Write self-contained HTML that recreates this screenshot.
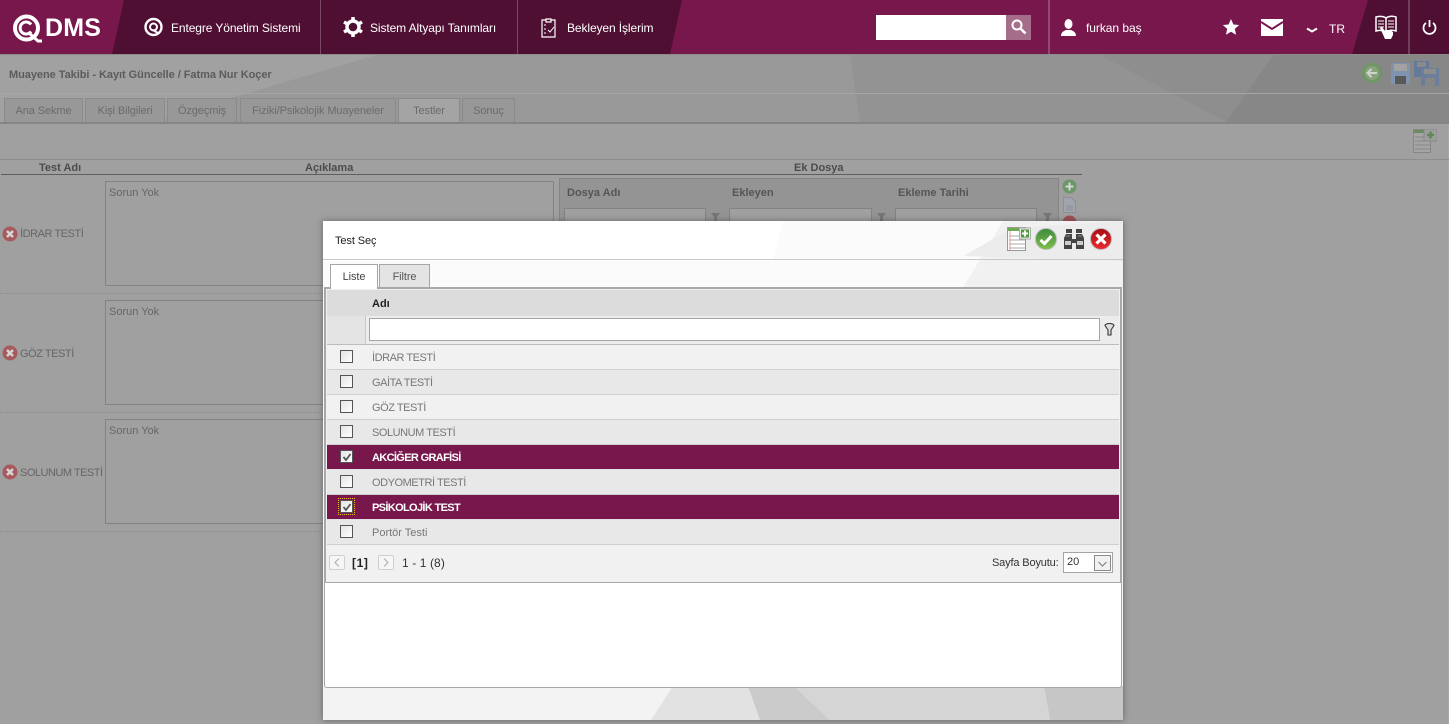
<!DOCTYPE html>
<html lang="tr"><head><meta charset="utf-8"><title>QDMS</title>
<style>
html,body{margin:0;padding:0}
body{width:1449px;height:724px;overflow:hidden;position:relative;background:#a0a0a0;font-family:"Liberation Sans",sans-serif;font-size:11px;color:#555}
div,span,svg{position:absolute}
.t{white-space:nowrap;line-height:14px}
.nav{color:#fff;font-size:12px;letter-spacing:-.1px}
.tab{top:98px;height:24px;background:#989898;border:1px solid #8a8a8a;border-bottom:0;box-sizing:border-box;text-align:center;line-height:24px;color:#6b6b6b;font-size:11px;letter-spacing:-.1px}
.h{font-weight:bold;font-size:11px;color:#4c4c4c}
.ta{left:105px;width:449px;border:1px solid #838383;box-sizing:border-box;color:#666;padding:5px 3px;line-height:12px}
.row{left:327px;width:792px;height:25px;box-sizing:border-box;border-bottom:1px solid #cfcfcf}
.row .cb{left:13px;top:5px;width:13px;height:13px;border:1px solid #555;box-sizing:border-box;background:linear-gradient(135deg,#e4e4e4,#fff)}
.row .l{left:45px;top:6px;color:#777;white-space:nowrap;line-height:14px;font-size:11px;letter-spacing:-.45px}
.sel{background:#77174b;border-bottom:1px solid #e2e2e2}
.sel .l{color:#fff;font-weight:bold;letter-spacing:-.65px}
</style></head><body>

<!-- background polygons -->
<svg style="left:0;top:54px" width="1449" height="70" viewBox="0 0 1449 70">
<rect width="1449" height="70" fill="#a1a1a1"/>
<polygon points="380,0 1449,0 1449,68 150,68" fill="#999999"/>
<polygon points="850,0 1449,0 1449,68 860,68" fill="#939393"/>
<polygon points="1098,0 1274,0 1226,68" fill="#8e8e8e"/>
<polygon points="1274,0 1449,0 1449,68 1226,68" fill="#878787"/>
</svg>
<div style="left:0;top:93px;width:1449px;height:1px;background:#a6a6a6"></div>

<!-- header -->
<div style="left:0;top:0;width:1449px;height:54px;background:#77174b"></div>
<svg style="left:0;top:0" width="1449" height="54"><polygon points="124,0 682,0 670,54 112,54" fill="#4f0f32"/><polygon points="1368,0 1449,0 1449,54 1352,54" fill="#4f0f32"/></svg>
<div style="left:320px;top:0;width:1px;height:54px;background:#7a4a63"></div>
<div style="left:517px;top:0;width:1px;height:54px;background:#7a4a63"></div>
<div style="left:1048px;top:0;width:2px;height:54px;background:#8f4a70"></div>
<div style="left:1408px;top:0;width:2px;height:54px;background:#70405a"></div>
<div style="left:0;top:54px;width:1449px;height:1px;background:#8c8c8c"></div>

<!-- logo -->
<svg style="left:12px;top:13px" width="34" height="31" viewBox="0 0 34 31"><circle cx="14.500" cy="15" r="11.500" fill="none" stroke="#fff" stroke-width="4"/><path d="M19 11.500a6 6 0 1 0 0 7" fill="none" stroke="#fff" stroke-width="3"/><path d="M17 20l9 8h4" stroke="#fff" stroke-width="3" fill="none"/></svg>
<div class="t" style="left:45px;top:14px;font-size:25px;line-height:28px;font-weight:bold;color:#fff;letter-spacing:.2px">DMS</div>

<!-- nav -->
<svg style="left:144px;top:17px" width="20" height="20" viewBox="0 0 20 20"><circle cx="9.500" cy="10" r="8" fill="none" stroke="#fff" stroke-width="2.400"/><circle cx="9.500" cy="10" r="3.500" fill="none" stroke="#fff" stroke-width="2"/><path d="M9 13l5 3" stroke="#fff" stroke-width="2"/></svg>
<div class="t nav" style="left:171px;top:21px">Entegre Yönetim Sistemi</div>
<svg style="left:343px;top:17px" width="20" height="20" viewBox="0 0 20 20"><circle cx="10" cy="10" r="6" fill="none" stroke="#fff" stroke-width="3.400"/><path d="M10 0v4M10 16v4M1 5l3.500 2M15.500 13l3.500 2M19 5l-3.500 2M4.500 13L1 15" stroke="#fff" stroke-width="3.500"/></svg>
<div class="t nav" style="left:370px;top:21px">Sistem Altyapı Tanımları</div>
<svg style="left:540px;top:17px" width="20" height="21" viewBox="0 0 20 21"><path d="M6 3H2v17h13V3h-4M6 2h5v3H6z" fill="none" stroke="#fff" stroke-width="1.200"/><path d="M4 8h2M4 12h2M4 16h2M8 13l2 2 4-5" fill="none" stroke="#fff"/></svg>
<div class="t nav" style="left:567px;top:21px">Bekleyen İşlerim</div>

<!-- search -->
<div style="left:876px;top:15px;width:130px;height:25px;background:#fff"></div>
<div style="left:1006px;top:15px;width:25px;height:25px;background:#a66d8b"></div>
<svg style="left:1010px;top:18px" width="18" height="18" viewBox="0 0 18 18"><circle cx="7" cy="7" r="4.500" fill="none" stroke="#fff" stroke-width="2"/><path d="M10.500 10.500l5 5" stroke="#fff" stroke-width="2.500"/></svg>

<!-- user -->
<svg style="left:1060px;top:18px" width="17" height="19" viewBox="0 0 17 19"><ellipse cx="8.500" cy="6" rx="4" ry="5" fill="#fff"/><path d="M1 18c0-4 3-5 5-6h5c2 1 5 2 5 6z" fill="#fff"/></svg>
<div class="t" style="left:1086px;top:21px;color:#fff;font-size:12px;letter-spacing:-.05px">furkan baş</div>
<svg style="left:1222px;top:18px" width="18" height="18" viewBox="0 0 18 18"><path d="M9 1l2.400 5.500 5.800.5-4.400 3.900 1.300 5.800L9 13.700l-5.100 3 1.300-5.800L.8 7l5.800-.5z" fill="#fff"/></svg>
<svg style="left:1261px;top:19px" width="22" height="17" viewBox="0 0 22 17"><rect width="22" height="17" fill="#fff"/><path d="M0 3l11 7 11-7" fill="none" stroke="#77174b" stroke-width="2"/></svg>
<svg style="left:1306px;top:27px" width="12" height="7" viewBox="0 0 12 7"><path d="M1 1.500l5 3 5-3" fill="none" stroke="#fff" stroke-width="2"/></svg>
<div class="t" style="left:1329px;top:22px;color:#fff;font-size:12px">TR</div>
<svg style="left:1375px;top:15px" width="24" height="25" viewBox="0 0 24 25"><path d="M1 2c4-1 7-1 10 1v14c-3-2-6-2-10-1zM11 3c3-2 7-2 10-1v14c-3-1-7-1-10 1z" fill="#4f0f32" stroke="#fff" stroke-width="1.500"/><path d="M3 6h6M3 9h6M3 12h6M13 6h6M13 9h6M13 12h6" stroke="#fff"/><path d="M5 13l2-1 3 4 1-1 4 0 3 2v3l-2 4h-6z" fill="#fff"/></svg>
<svg style="left:1422px;top:19px" width="15" height="16" viewBox="0 0 15 16"><path d="M4 4a6 6 0 1 0 7 0" fill="none" stroke="#fff" stroke-width="1.800"/><path d="M7.500 1v7" stroke="#fff" stroke-width="1.800"/></svg>

<!-- page title -->
<div class="t" style="left:9px;top:68px;font-weight:bold;color:#5c5c5c;font-size:11px;letter-spacing:-.05px">Muayene Takibi - Kayıt Güncelle / Fatma Nur Koçer</div>
<svg style="left:1361px;top:62px" width="22" height="22" viewBox="0 0 22 22"><circle cx="11" cy="11" r="10" fill="#6f9763"/><circle cx="11" cy="11" r="7" fill="#88a27d"/><path d="M16 11H7M10.500 7L6.500 11l4 4" fill="none" stroke="#cfd3cf" stroke-width="2"/></svg>
<svg style="left:1391px;top:63px" width="19" height="21" viewBox="0 0 19 21"><rect width="19" height="21" rx="1" fill="#7d93b0"/><rect x="3" y="1" width="13" height="7" fill="#a2a2a2"/><rect x="4" y="13" width="11" height="8" fill="#585858"/></svg>
<svg style="left:1414px;top:61px" width="26" height="25" viewBox="0 0 26 25"><rect width="15" height="16" fill="#65799a"/><rect x="3" y="1" width="9" height="5" fill="#8a8a8a"/><rect x="7" y="7" width="18" height="18" fill="#6b7f9c"/><rect x="10" y="8" width="12" height="5" fill="#8e8e8e"/><rect x="11" y="17" width="10" height="8" fill="#868686"/></svg>

<!-- tabs -->
<div class="tab" style="left:4px;width:79px">Ana Sekme</div>
<div class="tab" style="left:85px;width:80px">Kişi Bilgileri</div>
<div class="tab" style="left:167px;width:70px">Özgeçmiş</div>
<div class="tab" style="left:240px;width:156px">Fiziki/Psikolojik Muayeneler</div>
<div class="tab" style="left:398px;width:62px;background:#a4a4a4;height:25px">Testler</div>
<div class="tab" style="left:462px;width:53px">Sonuç</div>
<div style="left:0;top:122px;width:1449px;height:2px;background:#858585"></div>
<div style="left:0;top:124px;width:1449px;height:600px;background:#a0a0a0"></div>
<div style="left:1448px;top:124px;width:1px;height:600px;background:#a8a8a8"></div>
<div style="left:0;top:159px;width:1449px;height:1px;background:#8e8e8e"></div>

<svg style="left:1413px;top:129px" width="24" height="25" viewBox="0 0 24 25"><rect x=".5" y=".5" width="17" height="23" fill="#a5a5a5" stroke="#868686"/><rect x="1" y="1" width="16" height="3" fill="#6b8a60"/><path d="M2 8h15M2 12h15M2 16h15M2 20h15" stroke="#868686"/><rect x="11" y="0" width="13" height="12" fill="#9d9d9d" stroke="#868686"/><path d="M17.500 2.500v7M14 6h7" stroke="#5d8a52" stroke-width="2.500"/></svg>

<!-- table header -->
<div class="t h" style="left:39px;top:161px">Test Adı</div>
<div class="t h" style="left:305px;top:161px">Açıklama</div>
<div class="t h" style="left:794px;top:161px">Ek Dosya</div>
<div style="left:1px;top:174px;width:1081px;height:1px;background:#5f5f5f"></div>

<!-- rows -->
<div class="ta" style="top:181px;height:105px">Sorun Yok</div>
<div class="ta" style="top:300px;height:105px">Sorun Yok</div>
<div class="ta" style="top:419px;height:105px">Sorun Yok</div>
<div style="left:0;top:293px;width:1082px;height:0;border-top:1px dotted #8d8d8d"></div>
<div style="left:0;top:412px;width:1082px;height:0;border-top:1px dotted #8d8d8d"></div>
<div style="left:0;top:531px;width:1082px;height:0;border-top:1px dotted #8d8d8d"></div>
<svg style="left:2px;top:226px" width="16" height="16" viewBox="0 0 16 16"><circle cx="8" cy="8" r="7.500" fill="#a75a5e"/><path d="M5 5l6 6M11 5l-6 6" stroke="#d5d5d5" stroke-width="2.500"/></svg>
<div class="t" style="left:20px;top:227px;color:#666;letter-spacing:-.45px">İDRAR TESTİ</div>
<svg style="left:2px;top:345px" width="16" height="16" viewBox="0 0 16 16"><circle cx="8" cy="8" r="7.500" fill="#a75a5e"/><path d="M5 5l6 6M11 5l-6 6" stroke="#d5d5d5" stroke-width="2.500"/></svg>
<div class="t" style="left:20px;top:347px;color:#666;letter-spacing:-.45px">GÖZ TESTİ</div>
<svg style="left:2px;top:464px" width="16" height="16" viewBox="0 0 16 16"><circle cx="8" cy="8" r="7.500" fill="#a75a5e"/><path d="M5 5l6 6M11 5l-6 6" stroke="#d5d5d5" stroke-width="2.500"/></svg>
<div class="t" style="left:20px;top:466px;color:#666;letter-spacing:-.5px">SOLUNUM TESTİ</div>

<!-- file grid -->
<div style="left:559px;top:178px;width:500px;height:50px;background:#949494;border:1px solid #858585;box-sizing:border-box"></div>
<div class="t h" style="left:567px;top:186px;color:#555">Dosya Adı</div>
<div class="t h" style="left:732px;top:186px;color:#555">Ekleyen</div>
<div class="t h" style="left:898px;top:186px;color:#555">Ekleme Tarihi</div>
<div style="left:564px;top:208px;width:140px;height:16px;border:1px solid #838383;background:#a0a0a0"></div>
<div style="left:729px;top:208px;width:141px;height:16px;border:1px solid #838383;background:#a0a0a0"></div>
<div style="left:895px;top:208px;width:140px;height:16px;border:1px solid #838383;background:#a0a0a0"></div>
<svg style="left:710px;top:212px" width="11" height="9" viewBox="0 0 11 9"><path d="M1 1h9L7 5v4H4V5z" fill="#777"/></svg>
<svg style="left:876px;top:212px" width="11" height="9" viewBox="0 0 11 9"><path d="M1 1h9L7 5v4H4V5z" fill="#777"/></svg>
<svg style="left:1042px;top:212px" width="11" height="9" viewBox="0 0 11 9"><path d="M1 1h9L7 5v4H4V5z" fill="#777"/></svg>
<svg style="left:1062px;top:179px" width="15" height="15" viewBox="0 0 15 15"><circle cx="7.500" cy="7.500" r="7" fill="#6a9766"/><path d="M7.500 3.500v8M3.500 7.500h8" stroke="#d5d5d5" stroke-width="2"/></svg>
<svg style="left:1063px;top:197px" width="13" height="16" viewBox="0 0 13 16"><path d="M.5.500h8l4 4v11H.500z" fill="#a0a4ac" stroke="#8a8f9a"/><path d="M3 9h7M3 11h7M3 13h7" stroke="#8a8f9a"/></svg>
<svg style="left:1062px;top:215px" width="15" height="8" viewBox="0 0 15 8"><circle cx="7.500" cy="7.500" r="7" fill="#a04f52"/></svg>

<!-- modal -->
<div style="left:323px;top:221px;width:800px;height:499px;background:#fff;box-shadow:0 0 6px rgba(60,60,60,.6)"></div>
<svg style="left:323px;top:221px" width="800" height="499" viewBox="0 0 800 499">
<polygon points="0,40 800,40 800,499 0,499" fill="#f6f6f6"/>
<polygon points="460,0 800,0 800,40 640,67 0,67 0,40 450,40" fill="#fbfbfb"/>
<polygon points="680,0 800,0 800,67 640,67" fill="#f1f1f1"/>
<polygon points="640,35 690,7 800,0 800,40" fill="#ececec"/>
<polygon points="0,465 350,465 328,499 0,499" fill="#f3f3f3"/>
<polygon points="350,465 425,465 437,499 328,499" fill="#e2e2e2"/>
<polygon points="425,465 471,465 507,499 437,499" fill="#cbcbcb"/>
<polygon points="471,465 721,465 727,499 507,499" fill="#d5d5d5"/>
<polygon points="721,465 800,465 800,499 727,499" fill="#c6c6c6"/>
</svg>
<div style="left:323px;top:259px;width:800px;height:1px;background:#c8c8c8"></div>
<div class="t" style="left:335px;top:234px;font-size:11px;color:#222;letter-spacing:-.1px">Test Seç</div>

<!-- modal icons -->
<svg style="left:1007px;top:227px" width="24" height="25" viewBox="0 0 24 25"><rect x=".5" y=".5" width="18" height="23" fill="#fff" stroke="#999"/><rect x="1" y="1" width="17" height="3" fill="#6cab4f"/><path d="M2 9h16M2 13h16M2 17h16M2 21h16" stroke="#aaa"/><path d="M3 4v19" stroke="#e5a0a0"/><rect x="12.500" y="1" width="11" height="11" fill="#eee" stroke="#aaa"/><rect x="14" y="2.500" width="8" height="8" fill="#4c9a3c"/><path d="M18 3.500v6M15 6.500h6" stroke="#fff" stroke-width="2"/></svg>
<svg style="left:1035px;top:228px" width="22" height="22" viewBox="0 0 22 22"><defs><linearGradient id="g" x1="0" y1="0" x2="0" y2="1"><stop offset="0" stop-color="#3f8a3e"/><stop offset="1" stop-color="#7fc04a"/></linearGradient><linearGradient id="r" x1="0" y1="0" x2="0" y2="1"><stop offset="0" stop-color="#a80c14"/><stop offset="1" stop-color="#ec2b2f"/></linearGradient></defs><circle cx="11" cy="11" r="10.500" fill="url(#g)" stroke="#bbb"/><path d="M5.500 12l4 3.500 7-7.500" fill="none" stroke="#fff" stroke-width="3"/></svg>
<svg style="left:1063px;top:228px" width="22" height="22" viewBox="0 0 22 22"><rect x="3" y="1" width="6" height="4" fill="#444"/><rect x="13" y="1" width="6" height="4" fill="#444"/><path d="M1 21V10l2-4h6v5h4V6h6l2 4v11h-8v-6H9v6z" fill="#444"/><path d="M3 8h4M15 8h4" stroke="#888"/><rect x="2" y="13" width="6" height="4" fill="#ccc"/><rect x="14" y="13" width="6" height="4" fill="#ccc"/></svg>
<svg style="left:1090px;top:228px" width="22" height="22" viewBox="0 0 22 22"><circle cx="11" cy="11" r="10.500" fill="url(#r)" stroke="#bbb"/><path d="M6.500 6.500l9 9M15.500 6.500l-9 9" stroke="#fff" stroke-width="3.200"/></svg>

<!-- inner white panel -->
<div style="left:324px;top:287px;width:798px;height:401px;background:#fff;border:1px solid #a8a8a8;border-top:0;border-radius:0 0 3px 3px;box-sizing:border-box"></div>

<!-- modal tabs -->
<div class="tab" style="left:330px;top:264px;width:48px;height:25px;background:#fff;border-color:#a5a5a5;color:#444;z-index:2">Liste</div>
<div class="tab" style="left:379px;top:264px;width:51px;background:#e4e4e4;border-color:#a5a5a5;color:#555">Filtre</div>

<!-- grid -->
<div style="left:325px;top:287px;width:796px;height:296px;background:#f1f1f1;border:1px solid #a8a8a8;box-sizing:border-box;border-top:2px solid #a8a8a8"></div>
<div style="left:327px;top:290px;width:792px;height:26px;background:#dcdcdc"></div>
<div style="left:327px;top:316px;width:792px;height:28px;background:#ececec;border-bottom:1px solid #bdbdbd"></div>
<div style="left:327px;top:316px;width:38px;height:28px;background:#e4e4e4;border-right:1px solid #c8c8c8"></div>
<div class="t" style="left:372px;top:297px;font-weight:bold;color:#222">Adı</div>
<div style="left:369px;top:318px;width:731px;height:23px;background:#fff;border:1px solid #a5a5a5;box-sizing:border-box"></div>
<svg style="left:1104px;top:323px" width="11" height="13" viewBox="0 0 11 13"><path d="M1 2.500a4.500 2 0 0 1 9 0L7 7v5H4V7z" fill="#ddd" stroke="#333" stroke-width="1.100"/></svg>

<div class="row" style="top:345px;background:#f1f1f1"><div class="cb"></div><div class="l">İDRAR TESTİ</div></div>
<div class="row" style="top:370px;background:#e8e8e8"><div class="cb"></div><div class="l">GAİTA TESTİ</div></div>
<div class="row" style="top:395px;background:#f1f1f1"><div class="cb"></div><div class="l">GÖZ TESTİ</div></div>
<div class="row" style="top:420px;background:#e8e8e8"><div class="cb"></div><div class="l">SOLUNUM TESTİ</div></div>
<div class="row sel" style="top:445px"><div class="cb"><svg style="left:1px;top:1px" width="10" height="10" viewBox="0 0 10 10"><path d="M1.500 5l2.500 3 4.500-6" fill="none" stroke="#555" stroke-width="1.800"/></svg></div><div class="l">AKCİĞER GRAFİSİ</div></div>
<div class="row" style="top:470px;background:#e8e8e8"><div class="cb"></div><div class="l">ODYOMETRİ TESTİ</div></div>
<div class="row sel" style="top:495px"><div style="left:11px;top:3px;width:17px;height:17px;border:1px dotted #f0c000;box-sizing:border-box"></div><div class="cb"><svg style="left:1px;top:1px" width="10" height="10" viewBox="0 0 10 10"><path d="M1.500 5l2.500 3 4.500-6" fill="none" stroke="#555" stroke-width="1.800"/></svg></div><div class="l">PSİKOLOJİK TEST</div></div>
<div class="row" style="top:520px;background:#e8e8e8"><div class="cb"></div><div class="l" style="letter-spacing:0">Portör Testi</div></div>

<!-- pager -->
<div style="left:329px;top:555px;width:16px;height:15px;border:1px solid #d0d0d0;border-radius:2px;box-sizing:border-box;background:#f6f6f6"></div>
<svg style="left:334px;top:558px" width="6" height="9" viewBox="0 0 6 9"><path d="M5 .5L1 4.500l4 4" fill="none" stroke="#aaa"/></svg>
<div class="t" style="left:352px;top:556px;font-weight:bold;color:#222;font-size:12px;letter-spacing:.6px">[1]</div>
<div style="left:378px;top:555px;width:16px;height:15px;border:1px solid #d0d0d0;border-radius:2px;box-sizing:border-box;background:#f6f6f6"></div>
<svg style="left:383px;top:558px" width="6" height="9" viewBox="0 0 6 9"><path d="M1 .5l4 4-4 4" fill="none" stroke="#aaa"/></svg>
<div class="t" style="left:402px;top:556px;color:#333;font-size:12px;letter-spacing:.1px">1 - 1 (8)</div>
<div class="t" style="left:992px;top:556px;color:#333;letter-spacing:-.15px">Sayfa Boyutu:</div>
<div style="left:1063px;top:552px;width:50px;height:21px;background:#fff;border:1px solid #a5a5a5;box-sizing:border-box"></div>
<div class="t" style="left:1067px;top:555px;color:#333">20</div>
<div style="left:1094px;top:555px;width:17px;height:16px;background:#f1f1f1;border:1px solid #8a8a8a;box-sizing:border-box"></div>
<svg style="left:1098px;top:561px" width="9" height="6" viewBox="0 0 9 6"><path d="M.5 1l4 4 4-4" fill="none" stroke="#777"/></svg>
</body></html>
